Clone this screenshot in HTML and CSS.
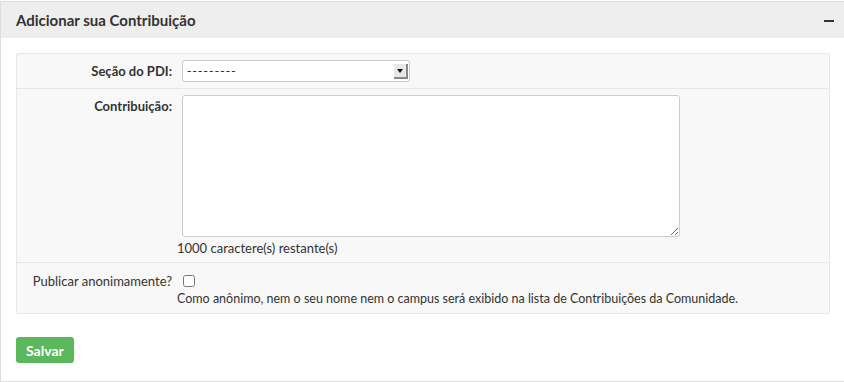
FILE: index.html
```html
<!DOCTYPE html>
<html lang="pt-BR">
<head>
  <meta charset="UTF-8">
  <title>Adicionar sua Contribuição</title>
  <meta name="viewport" content="width=device-width, initial-scale=1.0">
  <link rel="stylesheet" href="styles.css">
</head>
<body>

  <div class="panel">
    <div class="panel-heading">
      <h3>Adicionar sua Contribuição</h3>
      <span class="collapse-icon"></span>
    </div>

    <div class="panel-body">
      <form id="contribForm">
        <div class="form-box">

          <div class="form-row">
            <label class="label-strong" for="secao">Seção do PDI:</label>
            <div class="field">
              <div class="select-wrap">
                <select id="secao" name="secao">
                  <option>---------</option>
                </select>
                <span class="select-btn"></span>
              </div>
            </div>
          </div>

          <div class="form-row">
            <label class="label-strong" for="texto">Contribuição:</label>
            <div class="field">
              <textarea id="texto" name="texto" maxlength="1000"></textarea>
              <div class="counter"><span id="restante">1000</span> caractere(s) restante(s)</div>
            </div>
          </div>

          <div class="form-row">
            <label for="anonimo">Publicar anonimamente?</label>
            <div class="field">
              <input type="checkbox" id="anonimo" name="anonimo">
              <div class="help">Como anônimo, nem o seu nome nem o campus será exibido na lista de Contribuições da Comunidade.</div>
            </div>
          </div>

        </div>

        <button type="submit" class="btn-save">Salvar</button>
      </form>
    </div>
  </div>

  <script>
    const texto = document.getElementById("texto");
    const restante = document.getElementById("restante");

    texto.addEventListener("input", function() {
      restante.textContent = 1000 - texto.value.length;
    });
  </script>

</body>
</html>
```

FILE: styles.css
```css
* {
  box-sizing: border-box;
}

body {
  font-family: Lato, 'Open Sans', sans-serif;
  font-size: 13px;
  color: #333;
  background: #fff;
  margin: 0;
  padding-top: 1px;
}

.panel {
  border: 1px solid #ddd;
  border-right: none;
  height: 381px;
}

.panel-heading {
  background: #eee;
  height: 36px;
  padding: 0 10px 0 15px;
  display: flex;
  align-items: center;
  justify-content: space-between;
}

.panel-heading h3 {
  margin: 0;
  font-size: 15px;
  font-weight: bold;
  color: #333;
}

.collapse-icon {
  display: block;
  width: 10px;
  height: 2px;
  background: #333;
  margin-top: 1px;
}

.panel-body {
  padding: 15px 14px 18px 15px;
}

.form-box {
  background: #f8f8f8;
  border: 1px solid #e7e7e7;
  border-radius: 2px;
}

.form-row {
  display: grid;
  grid-template-columns: 160px 1fr;
  border-top: 1px solid #e7e7e7;
  padding: 6px 0;
}

.form-row:first-child {
  border-top: none;
}

.form-row label {
  text-align: right;
  padding-right: 5px;
  line-height: 22px;
}

.form-row:last-child label {
  line-height: 24px;
}

.label-strong {
  font-weight: bold;
}

.select-wrap {
  position: relative;
  width: 228px;
  margin-left: 5px;
}

.select-wrap select {
  width: 100%;
  height: 22px;
  border: 1px solid #ccc;
  border-radius: 3px;
  background: #fff;
  font-family: 'DejaVu Sans', sans-serif;
  font-size: 12px;
  letter-spacing: 1.2px;
  color: #333;
  padding: 0 4px;
  appearance: none;
  outline: none;
}

.select-btn {
  position: absolute;
  right: 2px;
  top: 4px;
  width: 14px;
  height: 15px;
  background: #e8e8e8;
  border-right: 2px solid #888;
  border-bottom: 2px solid #888;
  pointer-events: none;
}

.select-btn::after {
  content: "";
  position: absolute;
  left: 3px;
  top: 5px;
  border-left: 3px solid transparent;
  border-right: 3px solid transparent;
  border-top: 4px solid #111;
}

.field textarea {
  display: block;
  width: 498px;
  height: 142px;
  margin: 0 0 0 5px;
  border: 1px solid #ccc;
  border-radius: 3px;
  background: #fff;
  font-family: inherit;
  font-size: 13px;
}

.counter {
  line-height: 16px;
  margin-top: 3px;
}

.field input[type="checkbox"] {
  display: block;
  width: 12px;
  height: 12px;
  margin: 6px 0 0 6px;
}

.help {
  font-size: 12.5px;
  line-height: 16px;
  margin-top: 4px;
}

.btn-save {
  margin-top: 23px;
  background: #5cb85c;
  color: #fff;
  border: none;
  border-radius: 3px;
  height: 26px;
  padding: 0 10px;
  font-family: inherit;
  font-weight: bold;
  font-size: 14px;
  cursor: pointer;
}

.btn-save:hover {
  background: #4cae4c;
}
```
